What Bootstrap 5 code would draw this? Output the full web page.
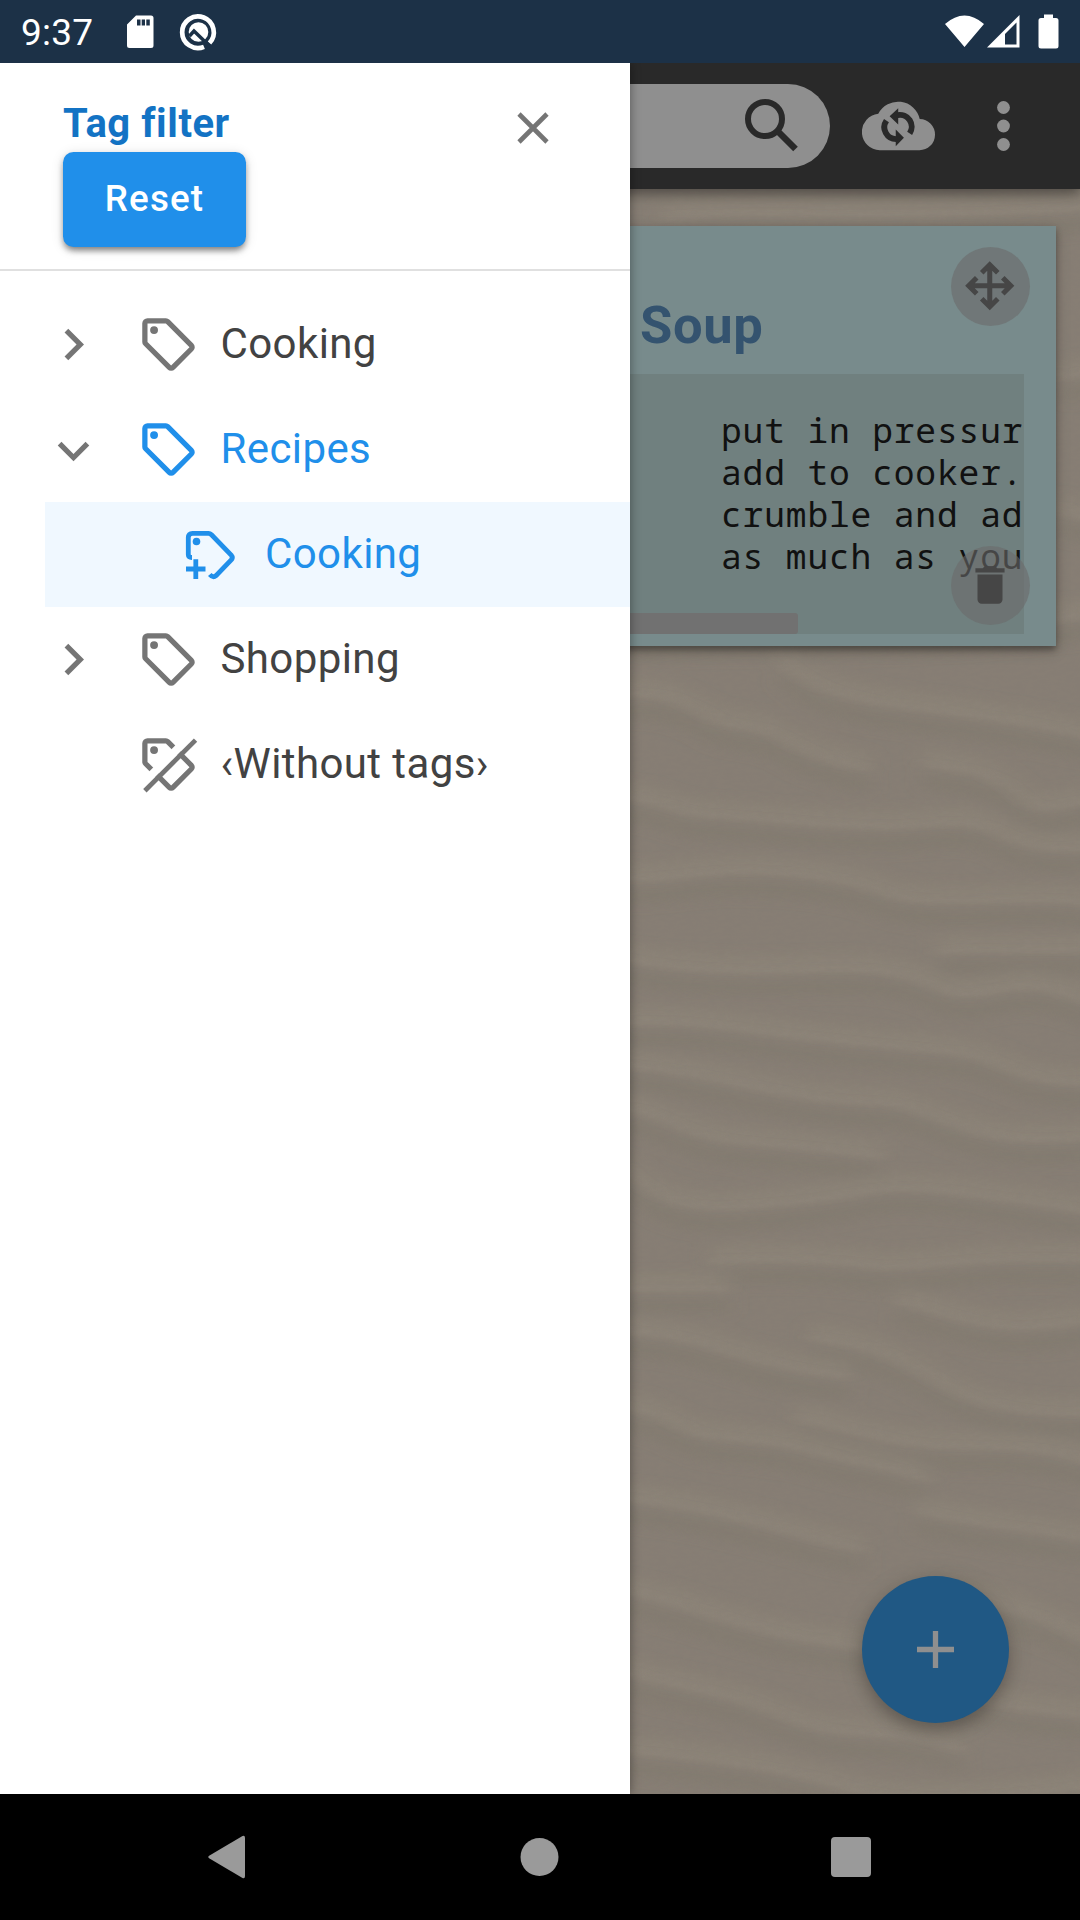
<!DOCTYPE html>
<html lang="en">
<head>
<meta charset="utf-8">
<meta name="viewport" content="width=device-width, initial-scale=1">
<title>Notes – Tag filter</title>
<link href="https://cdn.jsdelivr.net/npm/bootstrap@5.3.0/dist/css/bootstrap.min.css" rel="stylesheet">
<style>
body{width:1080px;height:1920px;overflow:hidden;font-family:Roboto,"Noto Sans",sans-serif;background:#000}
svg{display:block;flex:none}
.statusbar{height:63px;background:#1c3147;color:#fff;padding:0 20px 0 21px}
.clock{font-size:37px;line-height:63px;padding-top:2px;width:104px;letter-spacing:.2px}
.stage{height:1731px;background:#877e74}
.sand{left:0;top:0}
.appbar{height:126px;background:#292929;padding:21px 41px 21px 400px;box-shadow:0 5px 10px rgba(0,0,0,.28),0 2px 18px rgba(0,0,0,.2)}
.searchpill{width:430px;height:84px;border-radius:42px;background:#8f8f8f;padding-right:27px}
.note{width:1024px;height:420px;margin:37px 0 0 32px;background:#788b8c;padding:59px 32px 12px 50px;box-shadow:0 4px 6px rgba(0,0,0,.3),0 4px 14px rgba(0,0,0,.2)}
.note-title{font-size:52.5px;line-height:80px;height:89px;font-weight:700;color:#34536f;padding-left:558px;margin:0;letter-spacing:.6px}
.note-code{height:260px;background:#70807f;padding:35px 0 0 639px}
.note-code pre{font-family:"Noto Sans Mono","DejaVu Sans Mono",monospace;font-size:34.6px;letter-spacing:.85px;line-height:42px;color:#111;margin:0;overflow:visible;height:204px}
.hbar{height:21px;width:716px;background:#717171;border-radius:0 3px 3px 0;margin-left:-639px}
.round-btn{width:79px;height:79px;background:rgba(107,107,107,.6);right:26.5px}
.drag{top:20.5px}.trash{top:319.5px}
.fab{width:147px;height:147px;right:71px;bottom:71px;background:#205884;box-shadow:0 8px 14px rgba(0,0,0,.18),0 4px 26px rgba(0,0,0,.14)}
.drawer{left:0;top:0;width:630px;height:1731px;background:#fff;box-shadow:0 0 10px rgba(0,0,0,.4)}
.drawer-head{height:208px;border-bottom:2px solid #e0e0e0;padding:32px 79px 0 63px}
.drawer-title{font-size:40px;line-height:58px;height:57px;font-weight:700;color:#1373c4;margin:0;letter-spacing:.55px}
.reset{width:183px;height:95px;border-radius:10.5px;background:#208fea;color:#fff;font-size:36.75px;line-height:93px;font-weight:500;letter-spacing:1.15px;padding:0 0 2px;border:0;box-shadow:0 5px 6px -2px rgba(0,0,0,.35),0 3px 6px rgba(0,0,0,.18),0 2px 13px rgba(0,0,0,.12)}
.closer{margin-top:9px}
.tree{padding-top:21px}
.trow{height:105px;font-size:42px;color:#424242;letter-spacing:.4px}
.trow .lbl{line-height:50px;padding-bottom:2px}
.trow .arrow{width:63px;margin:0 32px 0 42px;color:#757575}
.trow .ico{width:63px;margin-right:20.5px;color:#757575}
.trow.on,.trow.on .ico{color:#208fea}
.sel{margin-left:45px;background:#f0f8ff;padding-left:132.500px}
.trow.sel .ico{margin-right:24.5px}
.navkeys{height:126px;padding:0 209px 0 207px}
</style>
</head>
<body class="d-flex flex-column">
<header class="statusbar d-flex align-items-center">
  <span class="clock">9:37</span>
  <svg width="110" height="50" viewBox="0 0 110 50" fill="#fff"><path fill-rule="evenodd" d="M16 9H31Q33.500 9 33.500 11.500V39Q33.500 41.500 31 41.500H9.500Q7 41.500 7 39V18ZM17 13V19H20.500V13ZM21.700 13V19H25V13ZM26.300 13V19H29.800V13Z" transform="translate(-5 -0.500)"/><g transform="translate(-4.500,0)"><path d="M89.500 36.500A15.800 15.800 0 1 0 84 40.300" fill="none" stroke="#fff" stroke-width="4.700" transform="translate(-.5 -.5)"/><circle cx="78" cy="25" r="9.800"/><path d="M69 29L73.500 24L90 40" fill="none" stroke="#1c3147" stroke-width="3.500"/></g></svg>
  <svg class="ms-auto" width="116" height="40" viewBox="0 0 116 40" fill="#fff"><path d="M1 12Q20.500-5 40 12L20.500 35ZM43 35.500L75.500 3V35.500Z"/><path d="M61 22L72.500 10.500V32.500H61Z" fill="#1c3147"/><path d="M100 2.500H109V6H112Q114.500 6 114.500 8.500V34Q114.500 36.500 112 36.500H97Q94.500 36.500 94.500 34V8.500Q94.500 6 97 6H100Z"/></svg>
</header>

<main class="stage position-relative overflow-hidden">
  <svg class="sand position-absolute" width="1080" height="1731" viewBox="0 0 1080 1731">
    <defs>
      <filter id="soft" x="-10%" y="-10%" width="120%" height="120%"><feGaussianBlur stdDeviation="10 6"/></filter>
      <filter id="fine" x="-10%" y="-10%" width="120%" height="120%"><feGaussianBlur stdDeviation="8 2.200"/></filter>
      <filter id="grain" x="0" y="0" width="100%" height="100%"><feTurbulence type="fractalNoise" baseFrequency=".12 .3" numOctaves="3" seed="4"/><feColorMatrix values="0 0 0 0 .2  0 0 0 0 .18  0 0 0 0 .16  .5 0 0 0 -.17"/></filter>
      <g id="ridges" fill="none">
        <path d="M-30 60C120 55 180 80 240 100S380 110 450 135S620 180 720 190"/>
        <path d="M450 0C520 40 600 60 760 75S1100 95 1400 135"/>
        <path d="M-30 238C80 240 140 268 240 270S600 290 760 290S1000 270 1100 300S1250 330 1400 328"/>
        <path d="M880 180C980 190 1080 190 1160 235S1300 245 1400 245"/>
        <path d="M-30 380C100 385 180 370 300 368S640 375 760 405S1200 405 1400 425"/>
        <path d="M-30 520C100 535 300 545 500 540S800 540 880 560S980 590 1100 575S1250 570 1400 600"/>
        <path d="M920 510C1000 500 1150 508 1400 505"/>
        <path d="M-30 632C150 625 300 640 460 652S780 672 960 682S1120 740 1400 736"/>
        <path d="M-30 706C150 710 350 745 520 760S760 765 840 780S1050 835 1200 835S1300 832 1400 832"/>
        <path d="M-30 780C90 785 140 825 290 836S620 850 760 866"/>
        <path d="M-30 880C70 940 160 955 280 953S600 940 720 925S1050 932 1400 962"/>
        <path d="M240 1048C400 1040 600 1045 720 1055S1000 1035 1400 1045"/>
        <path d="M-30 1095H300M800 1115C900 1130 1050 1165 1180 1162S1300 1155 1400 1150"/>
        <path d="M-30 1170C150 1170 280 1205 420 1225S600 1240 660 1250M540 1180C700 1190 800 1215 900 1250S1100 1315 1400 1312"/>
        <path d="M-30 1300C120 1310 140 1345 240 1352S440 1360 560 1380S760 1400 900 1430"/>
        <path d="M500 1320C700 1345 800 1370 1000 1370S1250 1375 1400 1400"/>
        <path d="M-30 1460C150 1470 250 1485 360 1500S560 1535 700 1550M860 1480C1000 1505 1200 1510 1400 1535"/>
        <path d="M-30 1620C150 1640 300 1680 480 1700S800 1720 950 1760"/>
        <path d="M-30 1760C200 1800 260 1790 460 1840S760 1850 1000 1900M950 1620C1100 1650 1250 1660 1400 1720"/>
        <path d="M-30 1900C200 1910 460 1930 620 1960S1000 1990 1400 1960M950 1800C1100 1820 1200 1830 1400 1840"/>
        <path d="M-30 -340C200 -300 500 -330 700 -300M1290 -500C1320 -480 1360 -510 1400 -500M1290 -270C1320 -240 1360 -260 1400 -240M-30 -40C400 -60 700 -30 1400 -80"/>
        <path d="M100 -770C400 -790 700 -760 1400 -790"/>
      </g>
    </defs>
    <rect width="1080" height="1731" fill="#877e74"/>
    <g filter="url(#soft)"><g transform="translate(630,597) scale(.3333,.574)"><use href="#ridges" y="30" stroke="#7f776d" stroke-width="30" opacity=".38"/><use href="#ridges" y="-11" stroke="#8f877b" stroke-width="28" opacity=".6"/></g></g>
    <g filter="url(#fine)"><g transform="translate(630,597) scale(.3333,.574)"><use href="#ridges" stroke="#93897e" stroke-width="6" opacity=".55"/></g></g>
    <rect width="1080" height="1731" filter="url(#grain)" opacity=".45"/>
  </svg>

  <div class="appbar position-relative d-flex align-items-center">
    <div class="searchpill d-flex align-items-center justify-content-end">
      <svg width="63" height="63" viewBox="0 0 63 63" fill="none" stroke="#292929"><circle cx="25" cy="24" r="17" stroke-width="6"/><path d="M38 36.500L55.500 54" stroke-width="6.500"/></svg>
    </div>
    <svg width="73" height="52" viewBox="0 0 74 52" style="margin-left:32px"><path fill="#8f8f8f" d="M18 50.500A18.500 18.500 0 0 1 16.500 13.600A22.500 22.500 0 0 1 58.500 19A15.700 15.700 0 0 1 58 50.500Z"/><g fill="none" stroke="#292929" stroke-width="6"><path d="M24.800 20.500A12 12 0 0 0 35 39.300M48.300 33.500A12 12 0 0 0 36 15"/></g><path fill="#292929" d="M36.700 8V24.500L28 16.200ZM34.200 29.500V46.500L42.500 38Z"/></svg>
    <svg class="ms-auto" width="70" height="52" viewBox="0 0 70 52" fill="#8f8f8f"><circle cx="34.500" cy="7.500" r="6.400"/><circle cx="34.500" cy="26" r="6.400"/><circle cx="34.500" cy="44.500" r="6.400"/></svg>
  </div>

  <article class="note position-relative">
    <h2 class="note-title">Soup</h2>
    <div class="note-code"><pre>put in pressur
add to cooker.
crumble and ad
as much as you</pre><div class="hbar"></div></div>
    <span class="round-btn drag rounded-circle position-absolute d-flex align-items-center justify-content-center"><svg width="60" height="60" viewBox="0 0 24 24"><path fill="#464646" d="M13 11H18L16.500 9.500L17.920 8.080L21.840 12L17.920 15.920L16.500 14.500L18 13H13V18L14.500 16.500L15.920 17.920L12 21.840L8.080 17.920L9.500 16.500L11 18V13H6L7.500 14.500L6.080 15.920L2.160 12L6.080 8.080L7.500 9.500L6 11H11V6L9.500 7.500L8.080 6.080L12 2.160L15.920 6.080L14.500 7.500L13 6V11Z" transform="translate(-.1,-.1)"/></svg></span>
    <span class="round-btn trash rounded-circle position-absolute d-flex align-items-center justify-content-center"><svg width="50" height="50" viewBox="0 0 24 24"><path fill="#464646" d="M19 4H15.500L14.500 3H9.500L8.500 4H5V6H19M6 19A2 2 0 0 0 8 21H16A2 2 0 0 0 18 19V7H6V19Z"/></svg></span>
  </article>

  <button type="button" aria-label="Add" class="fab btn border-0 rounded-circle position-absolute d-flex align-items-center justify-content-center p-0"><svg width="37" height="37" viewBox="0 0 37 37"><path d="M18.500 0V37M0 18.500H37" stroke="#8f8f8f" stroke-width="5.300"/></svg></button>

  <aside class="drawer position-absolute">
    <div class="drawer-head d-flex justify-content-between align-items-start">
      <div><h1 class="drawer-title">Tag filter</h1><button type="button" class="reset btn mt-0">Reset</button></div>
      <svg class="closer" width="36" height="46" viewBox="0 0 36 46"><path d="M4 9L32 37M32 9L4 37" transform="translate(0 1)" stroke="#757575" stroke-width="4.600"/></svg>
    </div>
    <svg width="0" height="0" class="position-absolute"><defs>
      <path id="tag" fill-rule="evenodd" d="M21.410 11.580L12.410 2.580A2 2 0 0 0 11 2H4A2 2 0 0 0 2 4V11A2 2 0 0 0 2.590 12.420L11.590 21.420A2 2 0 0 0 13 22A2 2 0 0 0 14.410 21.410L21.410 14.410A2 2 0 0 0 22 13A2 2 0 0 0 21.410 11.580M13 20L4 11V4H11L20 13ZM6.500 5A1.500 1.500 0 1 1 5 6.500A1.500 1.500 0 0 1 6.500 5Z"/>
      <path id="chev" d="M8.590 16.580L13.170 12L8.590 7.410L10 6L16 12L10 18Z"/>
    </defs></svg>
    <div class="tree d-flex flex-column">
      <div class="trow d-flex align-items-center"><svg class="arrow" height="63" viewBox="0 0 24 24" fill="currentColor"><use href="#chev"/></svg><svg class="ico" height="63" viewBox="0 0 24 24" fill="currentColor"><use href="#tag"/></svg><span class="lbl">Cooking</span></div>
      <div class="trow on d-flex align-items-center"><svg class="arrow" height="63" viewBox="0 0 24 24" fill="currentColor"><use href="#chev" transform="translate(0 .5) rotate(90 12 12)"/></svg><svg class="ico" height="63" viewBox="0 0 24 24" fill="currentColor"><use href="#tag"/></svg><span class="lbl">Recipes</span></div>
      <div class="trow on sel d-flex align-items-center"><svg class="ico" height="63" viewBox="0 0 63 63"><g fill="none" stroke="currentColor" stroke-width="4.800"><path d="M14 34.500Q10.300 34.500 10.300 31.500V14.500Q10.300 10.300 14.500 10.300H30.500Q32 10.300 33.500 11.800L53.200 32Q55.300 34.500 53.200 37L38 52.700Q35 55.200 31.800 51.500"/><path d="M8 46H27.500M17.800 36.300V56"/></g><circle cx="18.500" cy="18.500" r="3.800" fill="currentColor"/></svg><span class="lbl">Cooking</span></div>
      <div class="trow d-flex align-items-center"><svg class="arrow" height="63" viewBox="0 0 24 24" fill="currentColor"><use href="#chev"/></svg><svg class="ico" height="63" viewBox="0 0 24 24" fill="currentColor"><use href="#tag"/></svg><span class="lbl">Shopping</span></div>
      <div class="trow d-flex align-items-center"><span class="arrow"></span><svg class="ico" height="63" viewBox="0 0 24 24" fill="currentColor"><mask id="gap"><rect width="24" height="24" fill="#fff"/><path d="M0.500 21L20.500 1" stroke="#000" stroke-width="3.100"/></mask><use href="#tag" mask="url(#gap)"/><path d="M3 22L22.300 2.700" stroke="currentColor" stroke-width="1.800" fill="none"/></svg><span class="lbl">‹Without tags›</span></div>
    </div>
  </aside>
</main>

<nav class="navkeys d-flex align-items-center justify-content-between">
  <svg width="40" height="44" viewBox="0 0 40 44"><path d="M2.500 20.500L35.500 1Q38 0 38 3V41Q38 44 35.500 43L2.500 23.500Q0 22 2.500 20.500Z" fill="#9a9a9a"/></svg>
  <svg width="40" height="40" viewBox="0 0 40 40"><circle cx="20.500" cy="20" r="19" fill="#9a9a9a"/></svg>
  <svg width="40" height="40" viewBox="0 0 40 40"><rect width="40" height="40" rx="4" fill="#9a9a9a"/></svg>
</nav>
<script src="https://cdn.jsdelivr.net/npm/bootstrap@5.3.0/dist/js/bootstrap.bundle.min.js"></script>
</body>
</html>
